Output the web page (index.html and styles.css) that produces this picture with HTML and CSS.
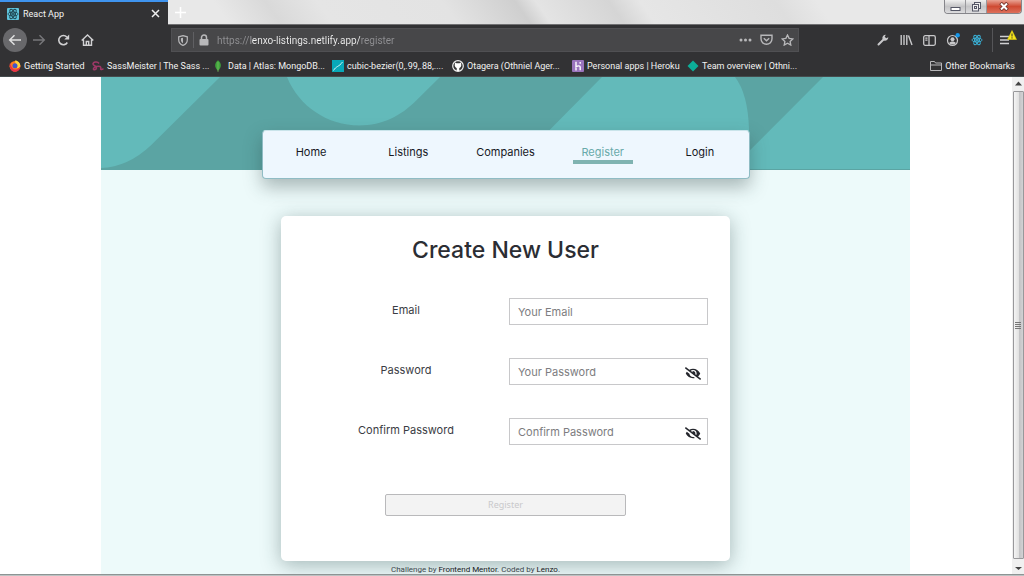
FILE: index.html
```html
<!DOCTYPE html>
<html lang="en">
<head>
<meta charset="utf-8">
<meta name="viewport" content="width=device-width, initial-scale=1">
<title>React App</title>
<link rel="stylesheet" href="styles.css">
</head>
<body>
<svg class="defs" width="0" height="0" aria-hidden="true">
  <symbol id="atom" viewBox="0 0 12 12"><g fill="none" stroke="currentColor" stroke-width=".9"><ellipse cx="6" cy="6" rx="5.2" ry="2"/><ellipse cx="6" cy="6" rx="5.2" ry="2" transform="rotate(60 6 6)"/><ellipse cx="6" cy="6" rx="5.2" ry="2" transform="rotate(120 6 6)"/></g><circle cx="6" cy="6" r="1.1" fill="currentColor"/></symbol>
  <symbol id="eye-off" viewBox="0 0 640 512"><path fill="currentColor" d="M320 400c-75.850 0-137.250-58.710-142.900-133.110L72.200 185.820c-13.790 17.300-26.480 35.590-36.720 55.590a32.350 32.350 0 0 0 0 29.190C89.710 376.410 197.070 448 320 448c26.910 0 52.870-4 77.890-10.460L346 397.390a144.130 144.130 0 0 1-26 2.610zm313.820 58.100l-110.550-85.440a331.250 331.250 0 0 0 81.250-102.070 32.350 32.350 0 0 0 0-29.190C550.290 135.590 442.930 64 320 64a308.150 308.150 0 0 0-147.320 37.700L45.460 3.370A16 16 0 0 0 23 6.180L3.370 31.450A16 16 0 0 0 6.180 53.900l588.360 454.730a16 16 0 0 0 22.460-2.810l19.640-25.270a16 16 0 0 0-2.820-22.450zM450.200 316.500l-39.300-30.400A94.750 94.750 0 0 0 416 256a94.760 94.760 0 0 0-121.310-92.210A47.650 47.650 0 0 1 304 192a46.640 46.640 0 0 1-1.540 10l-73.610-56.890A142.310 142.310 0 0 1 320 112a143.920 143.920 0 0 1 144 144c0 21.630-5.290 41.790-13.800 60.500z"/></symbol>
</svg>

<div class="chrome">
  <div class="tabs">
    <div class="tab">
      <svg class="favicon" viewBox="0 0 12 12"><rect width="12" height="12" rx="1" fill="#5fc4dc"/><use href="#atom" color="#1f4652"/></svg>
      <span class="tab-title">React App</span>
      <button class="icon-btn" type="button" aria-label="Close tab"><svg width="9" height="9" viewBox="0 0 9 9"><path d="M1 1l7 7M8 1L1 8" stroke="#eee" stroke-width="1.5"/></svg></button>
    </div>
    <button class="icon-btn new-tab" type="button" aria-label="New tab"><svg width="11" height="11" viewBox="0 0 11 11"><path d="M5.500 0v11M0 5.500h11" stroke="#fff" stroke-width="1.5"/></svg></button>
    <div class="window-buttons">
      <button type="button" aria-label="Minimize"><svg width="11" height="10" viewBox="0 0 11 10"><rect x="1" y="5.500" width="9" height="3" fill="#fff" stroke="#555766"/></svg></button>
      <button type="button" aria-label="Restore"><svg width="11" height="10" viewBox="0 0 11 10" fill="#eee" stroke="#555766"><rect x="3.500" y=".5" width="6" height="6"/><rect x="1.500" y="2.500" width="6" height="6.500"/><rect x="3.500" y="4.500" width="2" height="2"/></svg></button>
      <button class="win-close" type="button" aria-label="Close"><svg width="10" height="9" viewBox="0 0 10 9"><path d="M1.500 1l7 7M8.500 1l-7 7" stroke="#70302a" stroke-width="3.600"/><path d="M2 1.500l6 6M8 1.500l-6 6" stroke="#fff" stroke-width="2"/></svg></button>
    </div>
  </div>

  <div class="toolbar">
    <div class="nav-buttons">
      <button class="icon-btn back" type="button" aria-label="Back"><svg width="14" height="12" viewBox="0 0 14 12"><path d="M13 6H2M6.500 1.200L1.700 6l4.800 4.800" fill="none" stroke="#e0e0e0" stroke-width="1.500"/></svg></button>
      <button class="icon-btn" type="button" aria-label="Forward"><svg width="13" height="12" viewBox="0 0 13 12"><path d="M0 6h11M6.500 1.200L11.300 6l-4.800 4.800" fill="none" stroke="#77777a" stroke-width="1.400"/></svg></button>
      <button class="icon-btn" type="button" aria-label="Reload"><svg width="13" height="12" viewBox="0 0 13 12"><path d="M10.300 8.500A4.600 4.600 0 1 1 9.800 3" fill="none" stroke="#d0d0d2" stroke-width="1.600"/><path d="M12.200.5v5H7.300z" fill="#d0d0d2"/></svg></button>
      <button class="icon-btn" type="button" aria-label="Home"><svg width="13" height="12" viewBox="0 0 13 12"><path d="M.7 6.500L6.500 1l5.800 5.500M2.500 5.500v5.800h8V5.500M5.300 11V7.500h2.400V11" fill="none" stroke="#d0d0d2" stroke-width="1.400"/></svg></button>
    </div>
    <div class="urlbar">
      <svg width="10" height="11" viewBox="0 0 10 11"><path d="M5 .7L9.300 1.800v3C9.300 7.500 7.500 9.500 5 10.400 2.500 9.500.7 7.500.7 4.800v-3z" fill="none" stroke="#b8b8ba" stroke-width="1.200"/><path d="M5 2.800v5.400C3.500 7.400 2.900 6.300 2.900 4.800V3.300z" fill="#b8b8ba"/></svg>
      <span class="url-sep"></span>
      <svg width="10" height="12" viewBox="0 0 10 12"><rect x=".5" y="5" width="9" height="6.500" rx="1" fill="#b8b8ba"/><path d="M2.500 5.500V3.500a2.500 2.500 0 0 1 5 0v2" fill="none" stroke="#b8b8ba" stroke-width="1.500"/></svg>
      <input class="url" type="text" aria-label="Address" value="https://lenxo-listings.netlify.app/register">
      <button class="icon-btn" type="button" aria-label="Page actions"><svg width="13" height="4" viewBox="0 0 13 4" fill="#b8b8ba"><circle cx="2" cy="2" r="1.500"/><circle cx="6.500" cy="2" r="1.500"/><circle cx="11" cy="2" r="1.500"/></svg></button>
      <button class="icon-btn" type="button" aria-label="Save to Pocket"><svg width="13" height="12" viewBox="0 0 13 12" fill="none" stroke="#b8b8ba" stroke-width="1.400"><path d="M1 1.200h11v3.600a5.500 5.500 0 0 1-11 0z"/><path d="M3.800 4.200l2.700 2.600 2.700-2.600"/></svg></button>
      <button class="icon-btn" type="button" aria-label="Bookmark"><svg width="13" height="12" viewBox="0 0 13 12"><path d="M6.500 1l1.600 3.400 3.700.5-2.700 2.500.7 3.700-3.300-1.800-3.300 1.800.7-3.700L1.200 4.900l3.700-.5z" fill="none" stroke="#b8b8ba" stroke-width="1.300"/></svg></button>
    </div>
    <div class="tools">
      <button class="icon-btn" type="button" aria-label="Developer tools"><svg width="12" height="12" viewBox="0 0 12 12"><path d="M1.500 10.500L6.300 5.700" stroke="#c8c8ca" stroke-width="2" stroke-linecap="round"/><path d="M11.300 3.200L9.200 4.300 7.700 2.800 8.800.7A3.300 3.300 0 0 0 5.500 5l1.500 1.500a3.300 3.300 0 0 0 4.300-3.300z" fill="#c8c8ca"/></svg></button>
      <button class="icon-btn" type="button" aria-label="Library"><svg width="13" height="12" viewBox="0 0 13 12"><path d="M1.200 1v10M4 1v10M6.800 1v10M8.500 1.500L12 11" stroke="#c8c8ca" stroke-width="1.400"/></svg></button>
      <button class="icon-btn" type="button" aria-label="Sidebars"><svg width="13" height="11" viewBox="0 0 13 11" fill="none" stroke="#c8c8ca" stroke-width="1.300"><rect x=".7" y=".7" width="11.600" height="9.600" rx="1.500"/><path d="M6 1v9M2.300 3.200h2.200M2.300 5.200h2.200"/></svg></button>
      <button class="icon-btn" type="button" aria-label="Account"><svg width="14" height="14" viewBox="0 0 14 14"><circle cx="6.500" cy="7.500" r="5" fill="none" stroke="#c8c8ca" stroke-width="1.200"/><circle cx="6.500" cy="6.200" r="2" fill="#c8c8ca"/><path d="M3.300 10c.8-2 5.600-2 6.400 0-1.400 2-5 2-6.400 0z" fill="#c8c8ca"/><circle cx="11.700" cy="2.300" r="2.200" fill="#1696e8"/></svg></button>
      <button class="icon-btn atom" type="button" aria-label="React Developer Tools"><svg width="12" height="12"><use href="#atom"/></svg></button>
      <span class="tool-sep"></span>
      <button class="icon-btn menu" type="button" aria-label="Menu"><svg width="18" height="17" viewBox="0 0 18 17"><path d="M1 6.500h9M1 10h9M1 13.500h9" stroke="#d0d0d2" stroke-width="1.500"/><path d="M13 .5L17.500 9.500h-9z" fill="#f7e51c" stroke="#d9c60f" stroke-width=".6"/><path d="M13 3.500v3M13 7.300v1.200" stroke="#333"/></svg></button>
    </div>
  </div>

  <nav class="bookmarks" aria-label="Bookmarks">
    <a href="#"><svg viewBox="0 0 12 12"><circle cx="6" cy="6.300" r="5.400" fill="#ff7b1c"/><path d="M1 3C-.5 8 3 12 6 11.700 9 12 12 9 11 5c-1 4-3 5-5 4.500C3 9 2 6 1 3z" fill="#e8304a"/><path d="M6 .5c3 0 5.500 2.500 5.300 5.500C10 9 7 8.500 7 6z" fill="#ffd33a"/><circle cx="6" cy="5.800" r="2.500" fill="#4356c8"/></svg>Getting Started</a>
    <a href="#"><svg viewBox="0 0 12 12" fill="none" stroke="#a03868" stroke-width="1.500"><path d="M7 3.500C5.500 1 1 2 1 4s4 1.500 3.500 4S.8 10 1.500 8.500 6 5.500 8 6.500s0 3 1 3 1.500-.5 2.500-.5"/></svg>SassMeister | The Sass ...</a>
    <a href="#"><svg viewBox="0 0 12 12"><path d="M5 .3C9 3.500 8.500 8 5 10.700 1.500 8 1 3.500 5 .3z" fill="#3fa53c"/><path d="M5 2v9.800" stroke="#79bd61" stroke-width=".8"/></svg>Data | Atlas: MongoDB...</a>
    <a href="#"><svg viewBox="0 0 12 12"><rect width="12" height="12" fill="#08a9b8"/><path d="M1.500 10.500C4 6 7 7 10.500 2" fill="none" stroke="#d8f4f5"/></svg>cubic-bezier(0,.99,.88,....</a>
    <a href="#"><svg viewBox="0 0 12 12"><circle cx="6" cy="6" r="5.300" fill="#333" stroke="#eee" stroke-width="1.200"/><path d="M3 2.500l1.500.7h3L9 2.500l.3 3C9 7.300 8 7.800 7.300 8v3H4.700V8C4 7.800 3 7.300 2.700 5.500z" fill="#fff"/></svg>Otagera (Othniel Ager...</a>
    <a href="#"><svg viewBox="0 0 12 12"><rect width="12" height="12" rx="1" fill="#9a74bd"/><path d="M4 1.800v5C6 5.500 8.200 5.500 8.200 7v3.300M4 8v2.500M8.200 2v1.800" fill="none" stroke="#fff" stroke-width="1.400"/></svg>Personal apps | Heroku</a>
    <a href="#"><svg viewBox="0 0 12 12"><path d="M6 .5L11.500 6 6 11.500.5 6z" fill="#0cae98"/></svg>Team overview | Othni...</a>
    <a class="other" href="#"><svg viewBox="0 0 12 12" fill="none" stroke="#b8b8ba"><path d="M.5 10.500V1.500h4l1 1.500h6v7.500zM.5 5h11"/></svg>Other Bookmarks</a>
  </nav>
</div>

<div class="viewport">
  <main class="page">
    <header class="banner">
      <svg viewBox="0 0 809 93" preserveAspectRatio="none" aria-hidden="true"><path fill="#5ba4a3" d="M119 0L50 69Q27 91 0 92v1h410L501 0H339L315 24C300 39 282 49 258 49C227 49 198 30 186 0zM634 0Q647 17 648 53v22L722 0z"/></svg>
    </header>
    <nav class="site-nav" aria-label="Main">
      <a href="#">Home</a>
      <a href="#">Listings</a>
      <a href="#">Companies</a>
      <a class="active" href="#" aria-current="page">Register</a>
      <a href="#">Login</a>
    </nav>
    <form class="card">
      <h1>Create New User</h1>
      <div class="row"><label for="email">Email</label><div class="field"><input id="email" type="email" placeholder="Your Email"></div></div>
      <div class="row"><label for="password">Password</label><div class="field"><input id="password" type="password" placeholder="Your Password"><button class="eye" type="button" aria-label="Show password"><svg width="16" height="13"><use href="#eye-off"/></svg></button></div></div>
      <div class="row"><label for="confirm">Confirm Password</label><div class="field"><input id="confirm" type="password" placeholder="Confirm Password"><button class="eye" type="button" aria-label="Show confirmation"><svg width="16" height="13"><use href="#eye-off"/></svg></button></div></div>
      <button class="submit" type="submit" disabled>Register</button>
    </form>
    <footer class="credit">Challenge by <a href="#">Frontend Mentor</a>. Coded by <a href="#">Lenzo</a>.</footer>
  </main>
  <div class="scrollbar" aria-hidden="true">
    <svg width="7" height="14" viewBox="0 0 7 14"><path d="M0 8.500l3.500-4 3.500 4z" fill="#444"/></svg>
    <div class="thumb"><svg width="6" height="7" viewBox="0 0 6 7"><path d="M0 .5h6M0 2.500h6M0 4.500h6M0 6.500h6" stroke="#777"/></svg></div>
    <svg width="7" height="15" viewBox="0 0 7 15"><path d="M0 8h7l-3.500 3z" fill="#444"/></svg>
  </div>
</div>
<div class="taskbar-edge"></div>
</body>
</html>
```

FILE: styles.css
```css
* { box-sizing: border-box; }
body {
  margin: 0;
  height: 100vh;
  display: flex;
  flex-direction: column;
  overflow: hidden;
  background: #fff;
  color: #3a3c44;
  font: 11px/16px Inter, "Liberation Sans", sans-serif;
}
a { color: inherit; text-decoration: none; }
button, input { font: inherit; }
svg { display: block; flex: none; }
.defs { position: absolute; }

.chrome {
  flex: none;
  background: #323234;
  color: #f2f2f2;
  font: 9px/12px Roboto, "Noto Sans", sans-serif;
  border-bottom: 1px solid #454c4e;
}
.icon-btn {
  display: flex;
  align-items: center;
  justify-content: center;
  padding: 0;
  border: 0;
  background: none;
}
.tabs {
  display: flex;
  height: 25px;
  border-bottom: 1px solid #707072;
  background: linear-gradient(55deg, #e8e8e8 22%, #d9d9d9 27%, #e5e5e5 32%, #e3e3e3 44%, #cfcfcf 51%, #e4e4e4 53%, #d5d5d5 60%, #e6e6e6 63%, #dedede 76%, #e8e8e8 80%);
}
.tab {
  display: flex;
  align-items: center;
  gap: 4px;
  width: 168px;
  height: 25px;
  padding: 0 8px 0 7px;
  border-top: 2px solid #3f94ef;
  background: #323234;
}
.favicon { width: 12px; height: 12px; }
.tab-title { flex: 1; }
.new-tab { width: 25px; }
.window-buttons {
  display: flex;
  align-self: flex-start;
  height: 14px;
  margin-left: auto;
  margin-right: 2px;
  border: 1px solid #85858a;
  border-top: 0;
  border-radius: 0 0 4px 4px;
  overflow: hidden;
}
.window-buttons button {
  display: flex;
  align-items: center;
  justify-content: center;
  width: 21px;
  padding: 0;
  border: 0;
  border-right: 1px solid #98989c;
  background: linear-gradient(#f0f0f0, #c4c4c6 50%, #dcdcde);
}
.window-buttons .win-close {
  width: 34px;
  border: 0;
  background: linear-gradient(#e9a394, #cf4a33 50%, #dd705b);
}

.toolbar { display: flex; align-items: center; height: 30px; padding: 0 4px 0 3px; }
.nav-buttons { display: flex; align-items: center; width: 168px; }
.nav-buttons button { width: 24px; height: 24px; }
.nav-buttons .back { border-radius: 50%; background: #68686b; }
.urlbar {
  flex: 1;
  display: flex;
  align-items: center;
  gap: 8px;
  height: 24px;
  padding: 0 4px 0 6px;
  background: #474749;
  border: 1px solid #505053;
}
.url-sep { width: 1px; height: 16px; margin: 0 -3px; background: #606063; }
.url {
  flex: 1;
  min-width: 0;
  height: 20px;
  padding: 0;
  border: 0;
  color: transparent;
  font-size: 10px;
  background: linear-gradient(90deg, #919194 34px, #f0f0f0 34px, #f0f0f0 144px, #919194 144px);
  background-clip: text;
}
.tools { display: flex; align-items: center; width: 221px; padding-left: 72px; }
.tools button { width: 24px; height: 26px; }
.tools .atom { color: #3ab5dc; }
.tools .menu { margin-left: 4px; padding-bottom: 4px; }
.tool-sep { width: 1px; height: 24px; margin-left: 3px; background: #555558; }

.bookmarks {
  display: grid;
  grid-template-columns: 83px 121px 119px 120px 120px 115px 1fr auto;
  height: 21px;
  padding: 0 9px;
  align-items: center;
}
.bookmarks a { display: flex; align-items: center; gap: 3px; white-space: nowrap; }
.bookmarks svg { width: 12px; height: 12px; }

.viewport { flex: 1; min-height: 0; display: flex; }
.page {
  flex: 1;
  margin: 0 102px 0 101px;
  display: flex;
  flex-direction: column;
  align-items: center;
  background: #edfafa;
}
.banner { width: 100%; height: 93px; flex: none; background: #63baba; border-bottom: 1px solid #5ba4a3; }
.banner svg { width: 100%; height: 100%; }
.site-nav {
  position: relative;
  display: grid;
  grid-template-columns: repeat(5, 1fr);
  justify-items: center;
  align-items: start;
  width: 488px;
  max-width: 100%;
  height: 49px;
  flex: none;
  margin: -40px 0 37px;
  padding-top: 13px;
  border: 1px solid #8fbcc4;
  border-top-color: #c9e4ea;
  border-radius: 4px;
  background: #eef7fe;
  box-shadow: 0 8px 18px rgba(40, 60, 60, .35);
  color: #17191f;
}
.site-nav a { min-width: 60px; text-align: center; }
.site-nav .active { color: #68aaaa; border-bottom: 4px solid #7fb3b1; }

.card {
  width: 449px;
  max-width: 100%;
  height: 345px;
  flex: none;
  display: flex;
  flex-direction: column;
  padding: 18px 22px 0;
  border-radius: 5px;
  background: #fff;
  box-shadow: 0 4px 20px rgba(30, 60, 60, .36);
}
h1 { margin: 0 0 32px; color: #2b2d33; font-size: 23px; line-height: 32px; font-weight: 500; text-align: center; }
.row { display: grid; grid-template-columns: 206px 1fr; height: 60px; }
.row label { padding-top: 4px; text-align: center; }
.field { position: relative; height: 27px; }
.field input {
  width: 100%;
  height: 27px;
  padding: 0 8px;
  border: 1px solid #c8c8ca;
  background: #fff;
}
.field input::placeholder { color: #7d7d80; opacity: 1; }
.eye { position: absolute; right: 7px; top: 9px; padding: 0; border: 0; background: none; color: #25272d; }
.submit {
  width: 241px;
  height: 22px;
  margin: 16px auto 0;
  padding: 0;
  border: 1px solid #b9b9bb;
  border-radius: 2px;
  background: #f3f3f3;
  color: #c9c9cb;
  font: 9px/12px "Noto Sans", sans-serif;
}
.credit { width: 60%; padding: 3px 60px 0 0; text-align: center; font: 8px/12px Roboto, sans-serif; color: #3c464c; }
.credit a { color: #15181c; }

.scrollbar {
  flex: none;
  width: 12px;
  display: flex;
  flex-direction: column;
  align-items: center;
  background: #f0f0f0;
}
.thumb {
  flex: 1;
  width: 11px;
  display: flex;
  align-items: center;
  justify-content: center;
  border: 1px solid #98989b;
  border-radius: 1px;
  background: linear-gradient(90deg, #f4f4f4, #e2e2e2 50%, #c4c4c6 60%, #d2d2d4);
}
.taskbar-edge { flex: none; height: 2px; background: #bcc2c2; border-top: 1px solid #8d9494; }
```
